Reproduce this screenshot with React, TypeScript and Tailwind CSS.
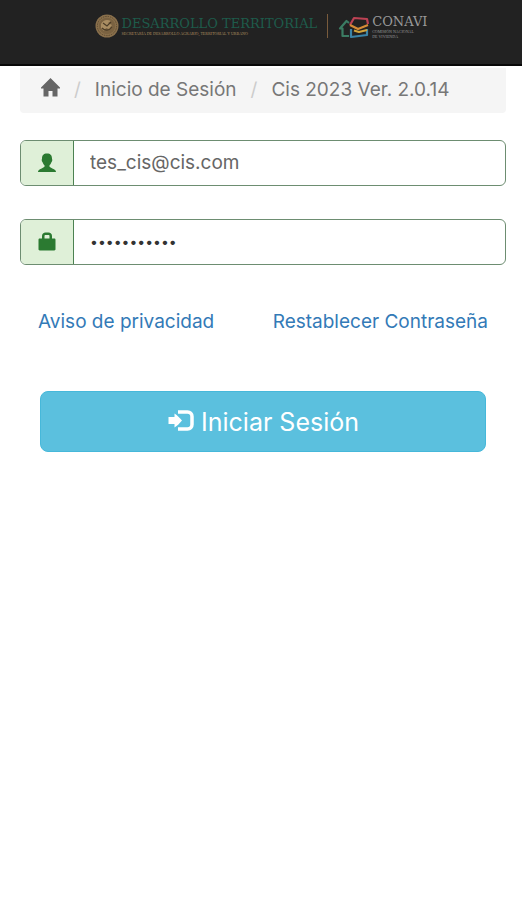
import { useState } from 'react';

const GobLogo = () => (
  <div className="flex items-center gap-[3px]">
    <svg className="size-6" viewBox="0 0 24 24" aria-hidden="true">
      <circle cx="12" cy="12" r="11.5" fill="#8a704c" />
      <circle cx="12" cy="12" r="9.6" fill="none" stroke="#5a482f" strokeWidth="1" strokeDasharray="1.4 1" />
      <circle cx="12" cy="12" r="8.2" fill="#7a6241" />
      <path d="M6 10c2-4 6-5 10-3l-3 2 4 2-3 4-3-1-2 3-3-3z" fill="#a98d62" />
      <path d="M8 9l4 3 4-4M7 14c3 3 7 3 10-1" fill="none" stroke="#4b3c27" strokeWidth="1.1" />
    </svg>
    <div className="flex flex-col">
      <span className="font-['DejaVu_Serif',serif] text-[13px] leading-[15px] whitespace-nowrap text-[#1e5b4b]">
        DESARROLLO TERRITORIAL
      </span>
      <span className="font-['Liberation_Serif',serif] text-[4px] leading-[5px] whitespace-nowrap text-[#b08f60]">
        SECRETARÍA DE DESARROLLO AGRARIO, TERRITORIAL Y URBANO
      </span>
    </div>
  </div>
);

const ConaviLogo = () => (
  <div className="flex items-center gap-[2px]">
    <svg className="h-6 w-8" viewBox="0 0 32 24" fill="none" strokeWidth="2.2" strokeLinejoin="round" aria-hidden="true">
      <path d="M11 8L8.500 6L2 13.500h2.500V21H11" stroke="#3b7c63" />
      <path d="M12 10L16 3L29 4l1 5" stroke="#bd4254" />
      <path d="M12 10l8 4 10-4" stroke="#d58b36" />
      <path d="M13 14v8l16-2v-6" stroke="#3b84a8" />
      <path d="M16 15.500l5 1.500 8-2" stroke="#d2a43c" />
    </svg>
    <div className="flex flex-col text-[#999]">
      <span className="font-['DejaVu_Serif',serif] text-[13px] leading-[15px]">CONAVI</span>
      <span className="font-['Liberation_Serif',serif] text-[4px] leading-[5px]">COMISIÓN NACIONAL</span>
      <span className="font-['Liberation_Serif',serif] text-[4px] leading-[5px]">DE VIVIENDA</span>
    </div>
  </div>
);

// Glyphicons
const HomeIcon = () => (
  <svg className="h-5 w-5" viewBox="0 0 20 20" fill="#666" aria-hidden="true">
    <path d="M10.500 0l9.500 9.500v1h-2.500V18.500h-5v-5.500h-4v5.500h-5v-8H1v-1z" />
  </svg>
);

const UserIcon = () => (
  <svg className="size-5" viewBox="0 0 20 20" fill="#2b7a31" role="img" aria-label="Correo">
    <path d="M10 0.500c3.500 0 5 2 5 5 0 .7.500 1 .2 2.200-.2 1-.8 1.300-1 2-.4 1.300-1 2-1.700 2.600v1.400c1 1.200 4.600 2 5.800 3.600.4.500.7 1 .7 1.700H1c0-.7.300-1.200.7-1.700 1.200-1.600 4.800-2.400 5.800-3.600v-1.400c-.7-.6-1.300-1.300-1.700-2.600-.2-.7-.8-1-1-2C4.500 6.500 5 6.200 5 5.500c0-3 1.500-5 5-5z" />
  </svg>
);

const LockIcon = () => (
  <svg className="size-5" viewBox="0 0 20 20" fill="#2b7a31" role="img" aria-label="Contraseña">
    <path d="M5 6.500V4C5 2 6.500.5 8.500.5h3C13.500.5 15 2 15 4v2.500h2.300c.7 0 1.200.5 1.200 1.200v9.600c0 .7-.5 1.200-1.200 1.200H2.700c-.7 0-1.200-.5-1.200-1.200V7.700c0-.7.500-1.200 1.200-1.200zM7.500 6.500h5V4c0-.7-.4-1-1-1h-3c-.6 0-1 .3-1 1z" />
  </svg>
);

const LoginIcon = () => (
  <svg className="h-6 w-7" viewBox="0 2 28 24" aria-hidden="true">
    <path d="M11 4h9.500c2.700 0 4.500 1.800 4.500 4.500v8c0 2.700-1.800 4.500-4.500 4.500H11" fill="none" stroke="#fff" strokeWidth="3.500" />
    <path d="M1.500 9h6V5.500c3 2 5 4 7.500 7-2.500 3-4.500 5-7.500 7V16h-6z" fill="#fff" />
  </svg>
);

const App = () => {
  const [email, setEmail] = useState('tes_cis@cis.com');
  const [password, setPassword] = useState('contrasena1');

  return (
    <div className="min-h-screen bg-white font-['Inter',sans-serif] text-[19px] leading-6">
      <header className="flex h-[66px] items-start justify-center gap-[10px] border-b-2 border-[#080808] bg-[#222] pt-[14px]">
        <GobLogo />
        <div className="h-6 w-px bg-[#795b3c]" />
        <ConaviLogo />
      </header>

      <main className="pt-[2px] pr-4 pl-5">
        <nav className="flex h-[45px] items-start rounded-b bg-[#f5f5f5] px-5 pt-[10px] text-[#777]">
          <a href="#" aria-label="Inicio"><HomeIcon /></a>
          <span className="px-[14px] text-[#ccc]">/</span>
          <a href="#">Inicio de Sesión</a>
          <span className="px-[14px] text-[#ccc]">/</span>
          <span>Cis 2023 Ver. 2.0.14</span>
        </nav>

        <form onSubmit={(e) => e.preventDefault()}>
          <div className="mt-[27px] flex h-[46px] overflow-hidden rounded-md border border-[#6d8d71]">
            <label htmlFor="email" className="flex w-[53px] shrink-0 items-center justify-center border-r border-[#4c8252] bg-[#dff0d8]">
              <UserIcon />
            </label>
            <input
              id="email"
              type="text"
              value={email}
              onChange={(e) => setEmail(e.target.value)}
              className="min-w-0 flex-1 px-4 text-[#666] outline-none"
            />
          </div>

          <div className="mt-[33px] flex h-[46px] overflow-hidden rounded-md border border-[#6d8d71]">
            <label htmlFor="password" className="flex w-[53px] shrink-0 items-center justify-center border-r border-[#4c8252] bg-[#dff0d8]">
              <LockIcon />
            </label>
            <input
              id="password"
              type="password"
              value={password}
              onChange={(e) => setPassword(e.target.value)}
              className="min-w-0 flex-1 px-4 text-sm text-[#333] outline-none"
            />
          </div>

          <div className="mt-[45px] flex justify-between pr-[18px] pl-[18px] text-[#337ab7]">
            <a href="#">Aviso de privacidad</a>
            <a href="#">Restablecer Contraseña</a>
          </div>

          <div className="mt-[57px] pr-5 pl-5">
            <button
              type="submit"
              className="flex h-[61px] w-full items-center justify-center gap-[6px] rounded-lg border border-[#46b8da] bg-[#5bc0de] text-[25px] text-white"
            >
              <LoginIcon />
              Iniciar Sesión
            </button>
          </div>
        </form>
      </main>
    </div>
  );
};

export default App;
